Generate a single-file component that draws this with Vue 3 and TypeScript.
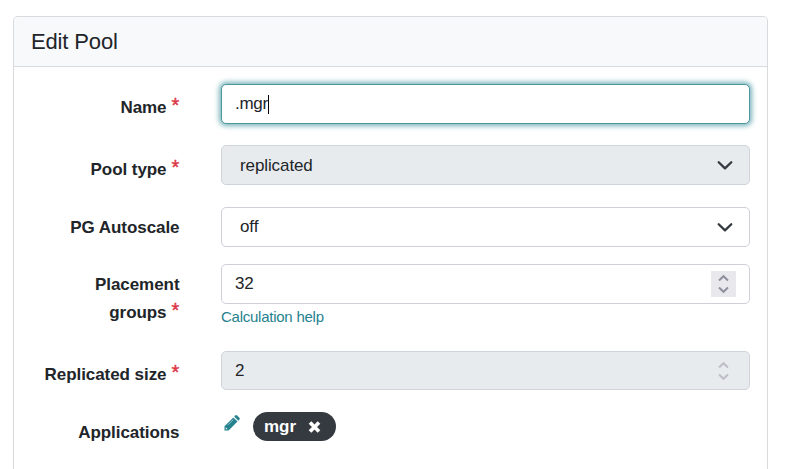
<script setup lang="ts">
import { ref } from 'vue'

interface Field {
  key: string
  label: string[]
  required: boolean
  kind: 'text' | 'select' | 'number' | 'tags'
  value: string
  disabled?: boolean
  help?: string
}

const fields = ref<Field[]>([
  { key: 'name', label: ['Name'], required: true, kind: 'text', value: '.mgr' },
  { key: 'type', label: ['Pool type'], required: true, kind: 'select', value: 'replicated', disabled: true },
  { key: 'autoscale', label: ['PG Autoscale'], required: false, kind: 'select', value: 'off' },
  { key: 'pgs', label: ['Placement', 'groups'], required: true, kind: 'number', value: '32', help: 'Calculation help' },
  { key: 'size', label: ['Replicated size'], required: true, kind: 'number', value: '2', disabled: true },
  { key: 'apps', label: ['Applications'], required: false, kind: 'tags', value: 'mgr' },
])
</script>

<template>
  <section class="card">
    <header class="card-header">Edit Pool</header>
    <form class="card-body" @submit.prevent>
      <div v-for="f in fields" :key="f.key" class="row" :class="`row-${f.key}`">
        <label class="label">
          <span v-for="(line, i) in f.label" :key="line" class="label-line">
            <span>{{ line }}</span>
            <span v-if="f.required && i === f.label.length - 1" class="required">*</span>
          </span>
        </label>
        <div v-if="f.kind === 'tags'" class="tags">
          <svg class="pencil" width="16" height="16" viewBox="0 0 16 16">
            <path d="M.5 11.3 9.4 2.4l4.1 4.1-8.9 8.9H.5z" fill="#25828e" />
            <path d="M10.2 1.6 11.3.5a1.3 1.3 0 0 1 1.8 0l2.3 2.3a1.3 1.3 0 0 1 0 1.8l-1.1 1.1z" fill="#25828e" />
            <path d="m4 9.9 5.4-5.4" fill="none" stroke="#a5d3da" stroke-width=".8" />
            <path d="M1.7 12.2v2h2z" fill="#eef7f8" />
          </svg>
          <span class="badge">
            <span>{{ f.value }}</span>
            <svg class="remove" width="13" height="12" viewBox="0 0 13 12">
              <path d="m2 1.5 9 9m0-9-9 9" fill="none" stroke="#fff" stroke-width="3.7" />
            </svg>
          </span>
        </div>
        <div v-else class="field">
          <div class="control" :class="[f.kind, { disabled: f.disabled }]">
            <span class="value">{{ f.value }}</span>
            <i v-if="f.kind === 'text'" class="caret"></i>
            <svg v-if="f.kind === 'select'" class="chevron" width="16" height="16" viewBox="0 0 16 16">
              <path d="m1.7 5.2 6.3 6.2 6.3-6.2" />
            </svg>
            <span v-if="f.kind === 'number'" class="spinner">
              <svg width="25" height="26" viewBox="0 0 25 26">
                <path d="m8 9.5 4.5-4.3L17 9.5M8 16.5l4.5 4.3 4.5-4.3" />
              </svg>
            </span>
          </div>
          <a v-if="f.help" class="help">{{ f.help }}</a>
        </div>
      </div>
    </form>
  </section>
</template>

<style>
html,
body {
  margin: 0;
  background: #fff;
}

#app {
  display: flow-root;
}
</style>

<style scoped>
.card {
  box-sizing: border-box;
  width: 755px;
  height: 453px;
  margin: 16px 0 0 13px;
  border: 1px solid #d8dadd;
  border-bottom: 0;
  border-radius: 5px 5px 0 0;
  color: #212529;
  font-family: "Liberation Sans", Arial, sans-serif;
  font-size: 17px;
}
.card-header {
  box-sizing: border-box;
  height: 50px;
  padding-left: 17px;
  border-bottom: 1px solid #d8dadd;
  border-radius: 4px 4px 0 0;
  background: #f8f9fb;
  font-size: 22px;
  letter-spacing: -0.15px;
  line-height: 49px;
}
.card-body {
  padding: 17px 17px 0 0;
}
.row {
  display: grid;
  grid-template-columns: 165.5px 529px;
  column-gap: 41.5px;
  align-items: start;
}
.row-name {
  height: 61px;
}
.row-type {
  height: 62px;
}
.row-autoscale {
  height: 57px;
}
.row-pgs {
  height: 87px;
}
.row-size {
  height: 60px;
}
.label {
  padding-top: 7px;
  font-weight: 700;
  letter-spacing: -0.06px;
  line-height: 28px;
}
.label-line {
  display: flex;
  justify-content: flex-end;
  align-items: baseline;
  height: 28px;
}
.row-name .label,
.row-size .label {
  padding-top: 10px;
}
.row-type .label {
  padding-top: 11px;
}
.row-apps .label {
  padding-top: 8px;
}
.required {
  width: 8px;
  margin-left: 5px;
  color: #dc3545;
  font-size: 20px;
  font-weight: 400;
  line-height: 20px;
  transform: translateY(-1px);
  -webkit-text-stroke: 0.4px #dc3545;
}
.control {
  box-sizing: border-box;
  display: flex;
  align-items: center;
  height: 40px;
  padding: 0 13px;
  border: 1px solid #ced0d9;
  border-radius: 5px;
  background: #fff;
}
.row-size .control {
  height: 39px;
}
.row-type .value {
  padding-top: 1px;
}
.value {
  letter-spacing: -0.1px;
}
.control.text {
  border-color: #4d98a0;
  box-shadow: 0 0 5px 2px rgba(37, 130, 142, 0.6);
}
.text .value {
  letter-spacing: -0.3px;
}
.control.select {
  padding: 0 16px 0 18px;
}
.control.disabled {
  border-color: #ced4da;
  background: #e8ebee;
}
.caret {
  width: 1px;
  height: 19px;
  background: #000;
}
.chevron {
  margin-left: auto;
}
.chevron path {
  fill: none;
  stroke: #343a40;
  stroke-width: 2.3;
  stroke-linecap: round;
  stroke-linejoin: round;
}
.spinner {
  display: flex;
  margin-left: auto;
  background: #e9e9ed;
}
.spinner path {
  fill: none;
  stroke: #8f8f9d;
  stroke-width: 2;
}
.disabled .spinner {
  background: transparent;
}
.disabled .spinner path {
  stroke: #bdbec8;
}
.help {
  display: block;
  margin-top: 3px;
  color: #25828e;
  font-size: 15px;
  letter-spacing: -0.25px;
  line-height: 20px;
}
.tags {
  display: flex;
  padding: 1px 0 0 3px;
}
.pencil {
  margin: 3px 13px 0 0;
}
.badge {
  box-sizing: border-box;
  display: flex;
  align-items: center;
  gap: 12px;
  width: 83px;
  height: 29px;
  padding-left: 11px;
  border-radius: 15px;
  background: #343a40;
  color: #fff;
  font-weight: 700;
}
</style>
